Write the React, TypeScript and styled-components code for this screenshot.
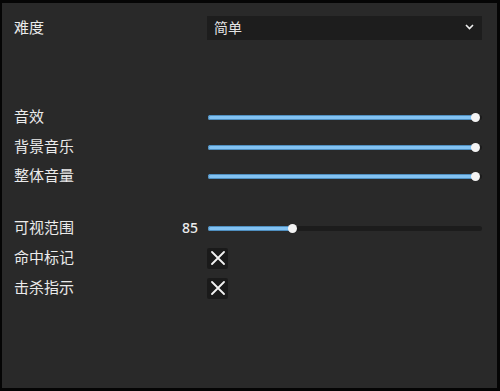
import React from 'react';
import styled, { createGlobalStyle } from 'styled-components';

const GlobalStyle = createGlobalStyle`
  html, body {
    margin: 0;
    padding: 0;
    background: #050505;
  }
  body {
    font-family: "Noto Sans", "Noto Sans CJK SC", sans-serif;
  }
`;

const Frame = styled.div`
  width: 500px;
  height: 391px;
  box-sizing: border-box;
  padding: 3px 3px 3px 2px;
  background: #050505;
`;

const Panel = styled.div`
  width: 495px;
  height: 385px;
  box-sizing: border-box;
  padding: 13px 15px 0 12px;
  background: #292929;
  display: flex;
  flex-direction: column;
`;

const Section = styled.div<{ $gap: number }>`
  margin-top: ${(p) => p.$gap}px;
  display: flex;
  flex-direction: column;
`;

const Row = styled.div<{ $height?: number }>`
  height: ${(p) => p.$height ?? 30}px;
  display: flex;
  align-items: center;
`;

const LabelCell = styled.div`
  flex: 1;
  display: flex;
  align-items: center;
  justify-content: space-between;
  padding-right: 9px;
  padding-bottom: 3px;
  font-family: "Noto Sans CJK SC", sans-serif;
  font-size: 15px;
  line-height: 20px;
  color: #ebebeb;
`;

const Value = styled.span`
  font-family: "Noto Sans", sans-serif;
  font-size: 14px;
  font-weight: 500;
  color: #ececec;
  padding-top: 2px;
`;

const Control = styled.div`
  width: 275px;
  display: flex;
  align-items: center;
`;

const Select = styled.div`
  width: 100%;
  height: 24px;
  box-sizing: border-box;
  padding: 0 8px 2px 7px;
  background: #1d1d1d;
  display: flex;
  align-items: center;
  justify-content: space-between;
  font-family: "Noto Sans CJK SC", sans-serif;
  font-size: 14px;
  color: #e4e4e4;
`;

const Slider = styled.div`
  position: relative;
  width: 274px;
  height: 9px;
  margin-left: 1px;
`;

const Track = styled.div`
  position: absolute;
  left: 0;
  right: 0;
  top: 2px;
  height: 5px;
  border-radius: 3px;
  background: #1c1c1c;
`;

const Fill = styled.div`
  position: absolute;
  left: 0;
  top: 2px;
  height: 5px;
  border-radius: 3px;
  background: #82c2f2;
  box-shadow: inset 0 0 0 1px #4f8fc0;
`;

const Thumb = styled.div`
  position: absolute;
  top: 0;
  width: 9px;
  height: 9px;
  margin-left: -4.5px;
  border-radius: 50%;
  background: #f4f4f4;
`;

const Check = styled.div`
  width: 21px;
  height: 21px;
  display: flex;
  align-items: center;
  justify-content: center;
  background: #1a1a1a;
  border-radius: 2px;
`;

const RangeSlider = ({ pct }: { pct: number }) => {
  const pos = 1 + pct * (266 / 100);
  return (
    <Slider>
      <Track />
      <Fill style={{ width: pos }} />
      <Thumb style={{ left: pos }} />
    </Slider>
  );
};

const CrossBox = () => (
  <Check>
    <svg width="14" height="14" viewBox="0 0 14 14">
      <path d="M1 1L13 13M13 1L1 13" stroke="#f2f2f2" strokeWidth="1.8" strokeLinecap="round" />
    </svg>
  </Check>
);

const volumes = ['音效', '背景音乐', '整体音量'];

const App = () => (
  <>
    <GlobalStyle />
    <Frame>
      <Panel>
        <Row $height={24}>
          <LabelCell>难度</LabelCell>
          <Control>
            <Select>
              <span>简单</span>
              <svg width="9" height="6" viewBox="0 0 9 6">
                <path d="M1 1L4.5 4.5L8 1" stroke="#eeeeee" strokeWidth="1.6" fill="none" />
              </svg>
            </Select>
          </Control>
        </Row>
        <Section $gap={63}>
          {volumes.map((v) => (
            <Row key={v} $height={29.5}>
              <LabelCell>{v}</LabelCell>
              <Control>
                <RangeSlider pct={100} />
              </Control>
            </Row>
          ))}
        </Section>
        <Section $gap={21.5}>
          <Row>
            <LabelCell>
              可视范围
              <Value>85</Value>
            </LabelCell>
            <Control>
              <RangeSlider pct={31.5} />
            </Control>
          </Row>
          <Row>
            <LabelCell>命中标记</LabelCell>
            <Control>
              <CrossBox />
            </Control>
          </Row>
          <Row>
            <LabelCell>击杀指示</LabelCell>
            <Control>
              <CrossBox />
            </Control>
          </Row>
        </Section>
      </Panel>
    </Frame>
  </>
);

export default App;
